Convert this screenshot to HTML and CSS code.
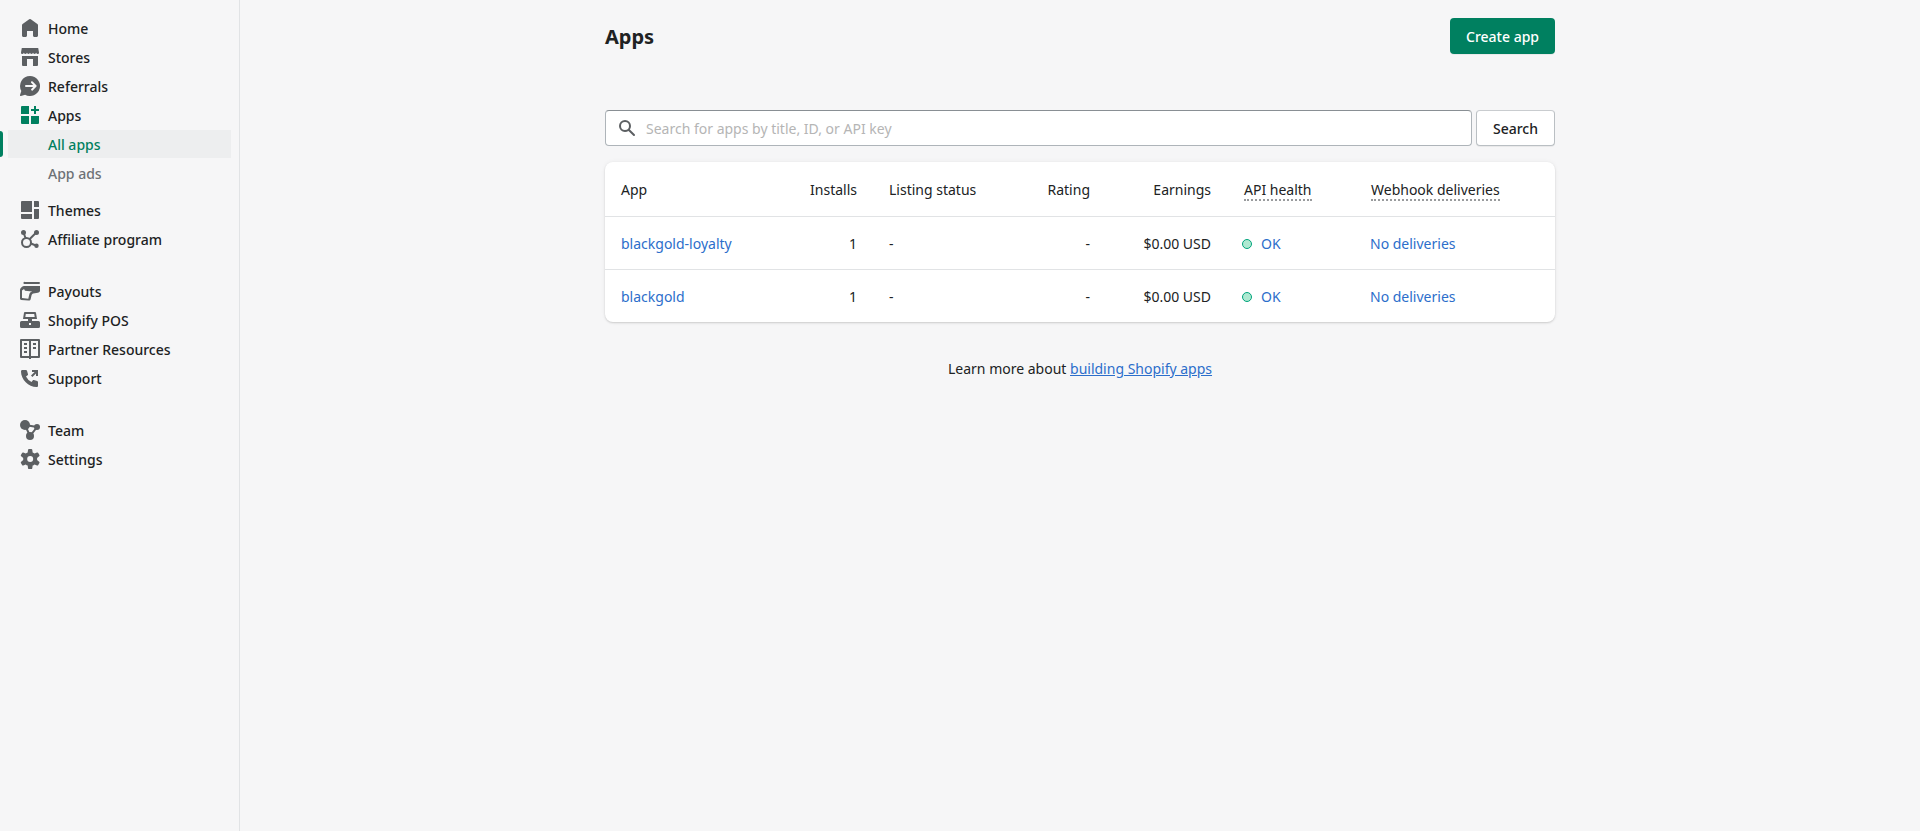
FILE: index.html
```html
<!DOCTYPE html>
<html lang="en">
<head>
<meta charset="utf-8">
<title>Apps</title>
<link rel="stylesheet" href="styles.css">
</head>
<body>
<div class="frame">
  <nav class="nav">
    <ul class="nav-group">
      <li class="nav-item"><svg class="icon" viewBox="0 0 20 20"><path d="M18 7.261V17.5c0 .841-.672 1.5-1.5 1.5h-2c-.828 0-1.5-.659-1.5-1.5V13H7v4.477C7 18.318 6.328 19 5.5 19h-2c-.828 0-1.5-.682-1.5-1.523V7.261a1.5 1.5 0 01.615-1.21l6.59-4.82a1.481 1.481 0 011.59 0l6.59 4.82A1.5 1.5 0 0118 7.26z"/></svg><a class="nav-label">Home</a></li>
      <li class="nav-item"><svg class="icon" viewBox="0 0 20 20"><path d="M1.800 1h16.400l.8 4.500C19 6.500 18.400 7 17.600 7s-1.500-.6-1.500-1.400C16.100 6.400 15.400 7 14.600 7S13 6.400 13 5.600C13 6.400 12.400 7 11.500 7S10 6.400 10 5.600C10 6.400 9.300 7 8.500 7S7 6.400 7 5.600C7 6.400 6.300 7 5.400 7S3.900 6.400 3.900 5.600C3.900 6.400 3.200 7 2.400 7S1 6.500 1 5.500z"/><path d="M2 9h16v9a1 1 0 0 1-1 1h-4v-7H7v7H3a1 1 0 0 1-1-1z"/></svg><a class="nav-label">Stores</a></li>
      <li class="nav-item"><svg class="icon" viewBox="0 0 20 20"><path fill-rule="evenodd" d="M10 0a10 10 0 1 1-4.900 18.700L1 20a.8.8 0 0 1-1-1l1.300-4.100A10 10 0 0 1 10 0zm1.700 5.300a1 1 0 0 0-.4 1.700L13.200 9H6a1 1 0 0 0 0 2h7.200l-1.900 2a1 1 0 0 0 1.400 1.400l3.600-3.700a1 1 0 0 0 0-1.400l-3.600-3.700a1 1 0 0 0-1-.3z"/></svg><a class="nav-label">Referrals</a></li>
      <li class="nav-item nav-item--open"><svg class="icon" viewBox="0 0 20 20"><path d="M2 1h7v8H1V2a1 1 0 0 1 1-1zM1 11h8v8H2a1 1 0 0 1-1-1zM11 11h8v7a1 1 0 0 1-1 1h-7zM14 1h2v3h3v2h-3v3h-2V6h-3V4h3z"/></svg><a class="nav-label">Apps</a></li>
      <li class="nav-sub nav-sub--selected"><a>All apps</a></li>
      <li class="nav-sub nav-sub--last"><a>App ads</a></li>
      <li class="nav-item"><svg class="icon" viewBox="0 0 20 20"><path d="M2 1h10v11H1V2a1 1 0 0 1 1-1zM14 1h4a1 1 0 0 1 1 1v5h-5zM1 14h11v5H2a1 1 0 0 1-1-1zM14 9h5v9a1 1 0 0 1-1 1h-4z"/></svg><a class="nav-label">Themes</a></li>
      <li class="nav-item"><svg class="icon" viewBox="0 0 20 20"><g class="stroke"><circle cx="6.500" cy="13.500" r="4.500"/><path d="M3.500 3.500l2 5.500M9.500 10.300l7-7M11 14.500l6 2.500"/></g><circle cx="3.500" cy="3.500" r="2.500"/><circle cx="16.500" cy="3.500" r="2.500"/><circle cx="16.500" cy="16.800" r="2.200"/></svg><a class="nav-label">Affiliate program</a></li>
    </ul>
    <ul class="nav-group">
      <li class="nav-item"><svg class="icon" viewBox="0 0 20 20"><path d="M5 1h14a1 1 0 0 1 0 2H4a1 1 0 0 1 1-2z"/><path fill-rule="evenodd" d="M4 5h16v4.500c0 1.400-1 2-2.200 2.200l-4.500.8c-1 .2-1.500 1-1.800 2l-.8 3.500c-.3 1.200-1 1.700-2.200 1.600L1.300 19C.5 18.900 0 18.400 0 17.600V9c0-.8.2-1.300.8-1.900l1.300-1.300C2.700 5.200 3.200 5 4 5zm0 3L2 9.500v7.600l6.300.6.900-3.900c.4-1.700 1.300-2.900 3-3.200L5 9.800z"/></svg><a class="nav-label">Payouts</a></li>
      <li class="nav-item"><svg class="icon" viewBox="0 0 20 20"><path fill-rule="evenodd" d="M5 2h10a1 1 0 0 1 1 .8L17 9h-5v2h6.500a1.500 1.500 0 0 1 1.500 1.500v4a1.500 1.500 0 0 1-1.500 1.500h-17A1.500 1.500 0 0 1 0 16.500v-4A1.500 1.500 0 0 1 1.500 11H8V9H3l1-6.200A1 1 0 0 1 5 2zm.8 2l-.5 3h9.400l-.5-3zM9 13v2h2v-2z"/></svg><a class="nav-label">Shopify POS</a></li>
      <li class="nav-item"><svg class="icon" viewBox="0 0 20 20"><path fill-rule="evenodd" d="M1 0h18a1 1 0 0 1 1 1v17a1 1 0 0 1-1 1h-8v1H9v-1H1a1 1 0 0 1-1-1V1a1 1 0 0 1 1-1zm1 2v15h7V2zm9 0v15h7V2z"/><path d="M4 4h3v2H4zM4 8h3v2H4zM4 12h3v2H4zM13 4h3v2h-3zM13 8h3v2h-3z"/></svg><a class="nav-label">Partner Resources</a></li>
      <li class="nav-item"><svg class="icon" viewBox="0 0 20 20"><path d="M2.500 2H6c.5 0 .8.3 1 .8l1 3.400c.1.500 0 .8-.4 1.100L6 8.500a12 12 0 0 0 5.500 5.500l1.200-1.600c.3-.4.7-.5 1.100-.4l3.400 1c.5.200.8.500.8 1v3.500c0 1-.5 1.500-1.500 1.500C8.500 19 1 11.500 1 3.500 1 2.500 1.500 2 2.500 2zM12 2h6v6h-2V5.400L12.400 9 11 7.600 14.600 4H12z"/></svg><a class="nav-label">Support</a></li>
    </ul>
    <ul class="nav-group">
      <li class="nav-item"><svg class="icon" viewBox="0 0 20 20"><g class="stroke"><path d="M5 5l12 2-7 9z"/></g><circle cx="5" cy="5" r="5"/><circle cx="17" cy="7" r="3"/><circle cx="10" cy="16" r="4"/></svg><a class="nav-label">Team</a></li>
      <li class="nav-item"><svg class="icon" viewBox="0 0 20 20"><path fill-rule="evenodd" d="M9.030 0a1 1 0 0 0-.990.859l-.370 2.598A6.993 6.993 0 0 0 5.742 4.570l-2.437-.980a1 1 0 0 0-1.239.428L.934 5.981a1 1 0 0 0 .248 1.287l2.066 1.621a7.060 7.060 0 0 0 0 2.222l-2.066 1.621a1 1 0 0 0-.248 1.287l1.132 1.962a1 1 0 0 0 1.239.428l2.438-.979a6.995 6.995 0 0 0 1.923 1.113l.372 2.598a1 1 0 0 0 .990.859h2.265a1 1 0 0 0 .990-.859l.371-2.598a6.995 6.995 0 0 0 1.924-1.112l2.438.978a1 1 0 0 0 1.238-.428l1.133-1.962a1 1 0 0 0-.249-1.287l-2.065-1.621a7.063 7.063 0 0 0 0-2.222l2.065-1.621a1 1 0 0 0 .249-1.287l-1.133-1.962a1 1 0 0 0-1.239-.428l-2.437.979a6.994 6.994 0 0 0-1.924-1.113L12.283.860A1 1 0 0 0 11.293 0H9.030zm1.133 13a3 3 0 1 0 0-6 3 3 0 0 0 0 6z"/></svg><a class="nav-label">Settings</a></li>
    </ul>
  </nav>
  <main class="main">
    <div class="page">
      <header class="page-header">
        <h1 class="title">Apps</h1>
        <button class="btn btn--primary">Create app</button>
      </header>
      <form class="search">
        <label class="field">
          <svg class="icon" viewBox="0 0 20 20"><path d="M8 12a4 4 0 110-8 4 4 0 010 8zm9.707 4.293l-4.820-4.820A5.968 5.968 0 0014 8 6 6 0 002 8a6 6 0 006 6 5.968 5.968 0 003.473-1.113l4.820 4.820a.997.997 0 001.414 0 .999.999 0 000-1.414z"/></svg>
          <input class="input" type="text" placeholder="Search for apps by title, ID, or API key">
        </label>
        <button class="btn" type="button">Search</button>
      </form>
      <section class="card">
        <table class="table">
          <colgroup><col class="c-app"><col class="c-installs"><col class="c-listing"><col class="c-rating"><col class="c-earnings"><col class="c-health"><col class="c-webhook"></colgroup>
          <thead>
            <tr><th>App</th><th class="num">Installs</th><th>Listing status</th><th class="num">Rating</th><th class="num">Earnings</th><th><span class="hint">API health</span></th><th><span class="hint">Webhook deliveries</span></th></tr>
          </thead>
          <tbody>
            <tr><td><a class="link">blackgold-loyalty</a></td><td class="num">1</td><td>-</td><td class="num">-</td><td class="num">$0.00 USD</td><td><span class="status"><i class="dot"></i><a class="link">OK</a></span></td><td><a class="link">No deliveries</a></td></tr>
            <tr><td><a class="link">blackgold</a></td><td class="num">1</td><td>-</td><td class="num">-</td><td class="num">$0.00 USD</td><td><span class="status"><i class="dot"></i><a class="link">OK</a></span></td><td><a class="link">No deliveries</a></td></tr>
          </tbody>
        </table>
      </section>
      <p class="footer-help">Learn more about <a class="link link--underlined">building Shopify apps</a></p>
    </div>
  </main>
</div>
</body>
</html>
```
FILE: styles.css
```css
* { box-sizing: border-box; }
body {
  margin: 0;
  background: #f6f6f7;
  color: #202223;
  font: 400 14px/20px "Noto Sans", sans-serif;
}
.frame { display: flex; min-height: 831px; }

.nav {
  flex: none;
  width: 240px;
  padding-top: 14px;
  border-right: 1px solid #e1e3e5;
}
.nav-group { list-style: none; margin: 0 0 23px; padding: 0; }
.nav-item {
  display: flex;
  align-items: flex-start;
  gap: 8px;
  height: 29px;
  padding: 4px 0 0 20px;
  font-weight: 500;
}
.nav-label { padding-top: 1px; }
.icon { display: block; flex: none; width: 20px; height: 20px; fill: #5c5f62; }
.stroke { fill: none; stroke: #5c5f62; stroke-width: 2; }
.nav-item--open .icon { fill: #008060; }
.nav-sub {
  position: relative;
  height: 28px;
  margin: 0 8px 1px;
  padding: 5px 0 0 40px;
  font-weight: 500;
  color: #6d7175;
}
.nav-sub--selected { background: #edeeef; color: #008060; }
.nav-sub--selected::before {
  content: "";
  position: absolute;
  left: -8px;
  top: 1px;
  width: 3px;
  height: 26px;
  border-radius: 0 4px 4px 0;
  background: #008060;
}
.nav-sub--last { margin-bottom: 9px; }

.main { flex: 1; }
.page { width: 950px; margin: 0 auto; padding-top: 18px; }
.page-header { display: flex; justify-content: space-between; align-items: center; height: 36px; }
.title { margin: 0; padding-top: 2px; font-size: 20px; line-height: 28px; font-weight: 700; }
.btn {
  height: 36px;
  padding: 2px 16px 0;
  border: 1px solid #babfc3;
  border-top-color: #c9cccf;
  border-radius: 4px;
  background: #fff;
  color: #202223;
  font: 500 14px/16px "Noto Sans", sans-serif;
  box-shadow: 0 1px 0 rgba(0, 0, 0, .05);
}
.btn--primary { border: 0; background: #008060; color: #fff; }

.search { display: flex; gap: 4px; margin-top: 56px; }
.field {
  display: flex;
  align-items: center;
  flex: 1;
  gap: 9px;
  height: 36px;
  padding-left: 11px;
  border: 1px solid #aeb4b9;
  border-top-color: #898f94;
  border-radius: 4px;
  background: #fff;
}
.input { flex: 1; padding: 2px 0 0; border: 0; outline: 0; background: none; font: inherit; }
.input::placeholder { color: #b5b5b5; opacity: 1; }

.card {
  margin-top: 16px;
  border-radius: 8px;
  background: #fff;
  box-shadow: 0 0 5px rgba(23, 24, 24, .05), 0 1px 2px rgba(0, 0, 0, .15);
}
.table { width: 100%; table-layout: fixed; border-collapse: separate; border-spacing: 0; }
.table th, .table td { padding: 0 16px; text-align: left; font-weight: 400; white-space: nowrap; }
.table th { height: 54px; padding-top: 2px; }
.table td { height: 53px; padding-top: 1px; border-top: 1px solid #e1e3e5; }
.table .num { text-align: right; }
.c-app { width: 188px; }
.c-installs { width: 80px; }
.c-listing { width: 157px; }
.c-rating { width: 76px; }
.c-earnings { width: 121px; }
.c-health { width: 127px; }
.c-webhook { width: 201px; }
.hint { margin-left: 1px; border-bottom: 2px dotted #999b9d; }
.status { display: flex; align-items: center; gap: 9px; margin-left: -1px; }
.dot { width: 10px; height: 10px; border: 1px solid #00a47c; border-radius: 50%; background: #aee9d1; }
.link { color: #2c6ecb; }
.link--underlined { text-decoration: underline; }
.footer-help { margin: 37px 0 0; text-align: center; }
```
